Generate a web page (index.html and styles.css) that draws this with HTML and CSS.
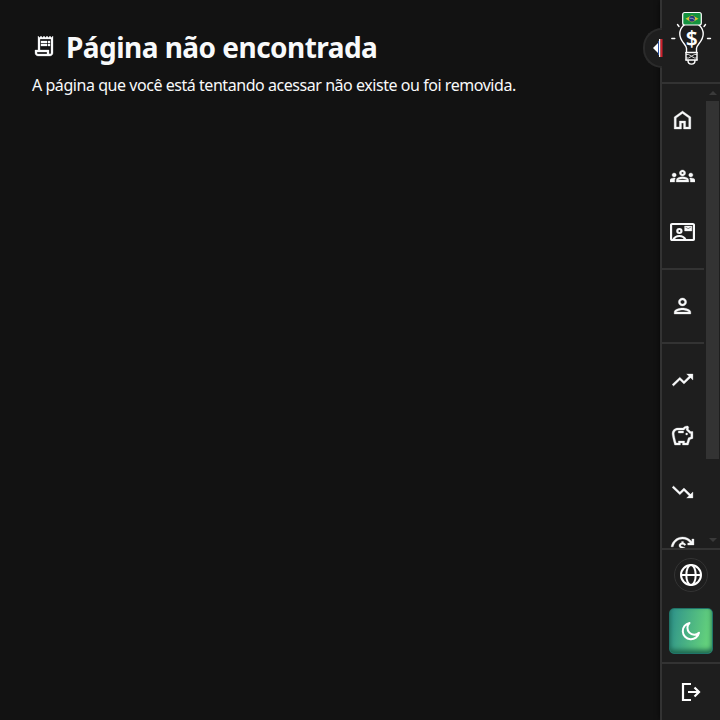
FILE: index.html
```html
<!DOCTYPE html>
<html lang="pt-BR">
<head>
<meta charset="utf-8">
<title>Página não encontrada</title>
<link rel="stylesheet" href="styles.css">
</head>
<body>
<main class="content">
  <h1 class="title">
    <svg class="icon" viewBox="0 0 24 24"><path d="M19.5 3.5 18 2l-1.5 1.5L15 2l-1.5 1.5L12 2l-1.5 1.5L9 2 7.5 3.5 6 2v14H3v3c0 1.66 1.34 3 3 3h12c1.66 0 3-1.34 3-3V2l-1.5 1.5zM15 20H6c-.55 0-1-.45-1-1v-1h10v2zm4-1c0 .55-.45 1-1 1s-1-.45-1-1v-3H8V5h11v14zM9 7h6v2H9zM16 7h2v2h-2zM9 10h6v2H9zM16 10h2v2h-2z"/></svg>
    <span class="title-text">Página não encontrada</span>
  </h1>
  <p class="message">A página que você está tentando acessar não existe ou foi removida.</p>
</main>
<aside class="sidebar">
  <div class="toggle"><svg class="toggle-icon" viewBox="0 0 10 18"><path class="arrow" d="M0 9 5.500 3.500v11z"/><path class="bar-blue" d="M5 2h1v14H5z"/><path class="bar-white" d="M6 0h1.500v18H6z"/><path class="bar-red" d="M7.500 0h2v18h-2z"/></svg></div>
  <header class="brand">
    <svg class="logo" viewBox="0 0 42 56">
      <g class="stroke">
        <path d="M16.500 42v-3.500c0-4-6.700-7-6.700-14.500a11.700 11.700 0 0 1 23.400 0c0 7.500-6.700 10.500-6.700 14.500V42M16 42.500h11M16 50h11M18 50.500c0 4.800 7 4.800 7 0M1.800 28.500h3M37.500 28.500h3M7.500 14.500l1.500 2M34 16.500l1.500-2"/>
        <path d="M16 42.500V50M27 42.500V50"/>
      </g>
      <path class="rungs" d="M16 44.500h2.500l3 1.700 3-1.700H27M16 48h2.500l3-1.700 3 1.700H27"/>
      <rect class="flag" x="12.700" y="2.500" width="18.600" height="12.500" rx="2"/>
      <path class="diamond" d="M15.500 8.750 22 5l6.500 3.750L22 12.500z"/>
      <circle class="disc" cx="22" cy="8.750" r="2.900"/>
      <path class="band" d="M19.500 8.300q3-.6 5 1.300"/>
      <text class="dollar" x="21.700" y="35.500">$</text>
    </svg>
  </header>
  <div class="scroll">
    <nav class="nav">
      <div class="group">
        <a class="item"><svg class="icon" viewBox="0 0 24 24"><path d="M6 19h3v-6h6v6h3v-9l-6-4.500L6 10v9Zm-2 2V9l8-6 8 6v12h-7v-6h-2v6H4Z"/></svg></a>
        <a class="item"><svg class="icon" viewBox="0 0 24 24"><path d="M4 13c1.100 0 2-.9 2-2s-.9-2-2-2-2 .9-2 2 .9 2 2 2zm1.130 1.100c-.37-.06-.74-.1-1.130-.1-.99 0-1.930.21-2.780.58C.48 14.900 0 15.620 0 16.430V18h4.500v-1.610c0-.83.23-1.610.63-2.290zM20 13c1.100 0 2-.9 2-2s-.9-2-2-2-2 .9-2 2 .9 2 2 2zm4 3.430c0-.81-.48-1.530-1.220-1.850-.85-.37-1.790-.58-2.780-.58-.39 0-.76.04-1.130.1.4.68.63 1.460.63 2.290V18H24v-1.570zM16.240 13.650c-1.170-.52-2.610-.9-4.240-.9s-3.070.39-4.240.9C6.680 14.130 6 15.210 6 16.390V18h12v-1.610c0-1.180-.68-2.260-1.760-2.740zM8.070 16c.09-.23.13-.39.91-.69.97-.38 1.990-.56 3.020-.56s2.050.18 3.020.56c.77.3.81.46.91.69H8.070zM12 8c.55 0 1 .45 1 1s-.45 1-1 1-1-.45-1-1 .45-1 1-1m0-2c-1.660 0-3 1.340-3 3s1.340 3 3 3 3-1.340 3-3-1.340-3-3-3z"/></svg></a>
        <a class="item"><svg class="icon" viewBox="0 0 24 24"><g class="line"><rect x="1" y="4" width="22" height="16" rx="1"/><circle cx="9" cy="11" r="2"/><path d="M3 20c1.200-2.800 3.500-4 6-4s4.800 1.200 6 4"/></g><path fill-rule="evenodd" d="M14 6h7v5h-7zM15 6.800v.7l2.500 1.500L20 7.500v-.7l-2.500 1.500z"/></svg></a>
      </div>
      <div class="group">
        <a class="item"><svg class="icon" viewBox="0 0 24 24"><path d="M12 6c1.100 0 2 .9 2 2s-.9 2-2 2-2-.9-2-2 .9-2 2-2m0 10c2.700 0 5.800 1.290 6 2H6c.23-.72 3.310-2 6-2m0-12C9.790 4 8 5.790 8 8s1.790 4 4 4 4-1.790 4-4-1.790-4-4-4zm0 10c-2.670 0-8 1.340-8 4v2h16v-2c0-2.660-5.330-4-8-4z"/></svg></a>
      </div>
      <div class="group">
        <a class="item"><svg class="icon" viewBox="0 0 24 24"><path d="m16 6 2.290 2.290-4.880 4.880-4-4L2 16.590 3.410 18l6-6 4 4 6.300-6.290L22 12V6z"/></svg></a>
        <a class="item"><svg class="icon" viewBox="0 0 24 24"><path d="M15 10c0-.55.45-1 1-1s1 .45 1 1-.45 1-1 1-1-.45-1-1zM8 9h5V7H8v2zM22 7.500v6.970l-2.820.94L17.500 21H12v-2h-2v2H4.500S2 12.540 2 9.500C2 6.460 4.460 4 7.500 4h5c.91-1.210 2.360-2 4-2 .83 0 1.500.67 1.500 1.500 0 .21-.04.4-.12.58-.14.34-.26.73-.32 1.150l2.370 2.270H22zm-2 2h-1L15.500 6c0-.65.09-1.290.26-1.910-.97.25-1.760.97-2.090 1.910H7.500C5.570 6 4 7.570 4 9.500c0 1.880 1.220 6.650 2.010 9.500H8v-2h6v2h2.010l1.550-5.150 2.440-.82V9.500z"/></svg></a>
        <a class="item"><svg class="icon" viewBox="0 0 24 24"><path d="m16 18 2.290-2.290-4.880-4.880-4 4L2 7.410 3.410 6l6 6 4-4 6.300 6.290L22 12v6z"/></svg></a>
        <a class="item"><svg class="icon" viewBox="0 0 24 24"><path d="M12 1C6.500 1 2 5 1 10.800h2.100C4 6.300 7.600 3 12 3c3 0 5.700 1.600 7.300 4H17v2h6V3h-2v2.500C19 2.800 15.700 1 12 1zm-.9 4.500v1.300C9.500 7.100 8.600 8.200 8.600 9.500c0 1.500 1 2.400 3.200 3.100 1.700.6 2.100 1 2.100 1.600 0 .7-.6 1.200-1.800 1.200-1.100 0-1.700-.5-2-1.300l-1.600.6c.4 1.300 1.400 2 2.600 2.300v1.200h1.800V17c1.800-.3 2.800-1.300 2.800-2.800 0-1.600-.9-2.500-3.300-3.300-1.500-.5-2-.8-2-1.400s.6-1.100 1.600-1.100 1.500.5 1.700 1.100l1.600-.7c-.4-1.100-1.200-1.800-2.400-2V5.500z"/></svg></a>
      </div>
    </nav>
    <div class="scrollbar"><i class="up"></i><i class="thumb"></i><i class="down"></i></div>
  </div>
  <div class="tools">
    <div class="globe"><svg class="globe-icon" viewBox="0 0 24 24"><circle cx="12" cy="12" r="10"/><ellipse cx="12" cy="12" rx="4.700" ry="10"/><path d="M2 12h20"/></svg></div>
    <div class="theme"><svg class="moon" viewBox="0 0 20 20"><path d="M8.500 2A8.200 8.200 0 1 0 18 11.800 6.300 6.300 0 0 1 8.500 2Z"/></svg></div>
  </div>
  <footer class="logout"><svg class="exit" viewBox="0 0 20 20"><path d="M10 2H2v16h8M7 10h11M13.500 5.500 18 10l-4.500 4.500"/></svg></footer>
</aside>
</body>
</html>
```

FILE: styles.css
```css
* { box-sizing: border-box; }
body {
  margin: 0;
  height: 720px;
  display: flex;
  overflow: hidden;
  background: #121212;
  color: #f8f9fa;
  font-family: "Segoe UI", "Noto Sans", sans-serif;
}
.content { flex: 1; padding: 27px 32px; }
.title { display: flex; align-items: center; gap: 10px; height: 40px; margin: 0; font-size: 28px; line-height: 40px; }
.title .icon { width: 24px; height: 24px; margin-top: -2px; }
.title-text { font-size: 28px; letter-spacing: -0.54px; white-space: nowrap; }
.message { margin: 6px 0 0; font-size: 16px; line-height: 24px; letter-spacing: -0.45px; white-space: nowrap; }
.icon { display: block; width: 24px; height: 24px; fill: currentColor; stroke: currentColor; stroke-width: 0.3; }
.line { fill: none; stroke: currentColor; stroke-width: 2.1; }
.sidebar {
  position: relative;
  display: flex;
  flex-direction: column;
  width: 60px;
  border-left: 2px solid #333;
  background: #1e1e1e;
  box-shadow: 0 0 5px #000a;
}
.toggle {
  position: absolute;
  z-index: 1;
  left: -19px;
  top: 28px;
  width: 19px;
  height: 40px;
  border: 2px solid #2b2b2b;
  border-right: 0;
  border-radius: 20px 0 0 20px;
  background: #1e1e1e;
}
.toggle-icon { position: absolute; left: 8px; top: 9px; width: 10px; height: 18px; }
.arrow, .bar-white { fill: #fff; }
.bar-blue { fill: #2850a0; }
.bar-red { fill: #d0202c; }
.brand { height: 84px; border-bottom: 2px solid #333; padding: 10px 0 0 8px; }
.logo { display: block; width: 42px; height: 56px; }
.stroke { fill: none; stroke: #fff; stroke-width: 1.4; stroke-linecap: round; stroke-linejoin: round; }
.rungs { fill: none; stroke: #fff; stroke-width: 0.8; }
.flag { fill: #14923f; stroke: #fff; stroke-width: 1.2; }
.diamond { fill: #d8c433; }
.disc { fill: #20377c; }
.band { fill: none; stroke: #cde; stroke-width: 0.6; }
.dollar { fill: #fff; font: 600 21px "Noto Sans", sans-serif; text-anchor: middle; }
.scroll { display: flex; height: 464px; overflow: hidden; }
.nav { width: 42px; }
.group { padding: 8px 0; border-bottom: 2px solid #333; }
.item { display: flex; align-items: center; justify-content: center; height: 56px; padding-right: 1px; }
.item .icon { transform: translateX(-0.5px) scaleX(1.04); }
.scrollbar { display: flex; flex-direction: column; align-items: center; width: 13px; margin-left: 2px; padding: 7px 0 6px; }
.up, .down { border: 4px solid transparent; }
.up { border-top: 0; border-bottom-color: #3a3a3a; }
.down { margin-top: auto; border-bottom: 0; border-top-color: #3a3a3a; }
.thumb { width: 13px; height: 358px; margin-top: 6px; background: #333; }
.tools { display: flex; flex-direction: column; align-items: center; gap: 16px; height: 114px; padding-top: 8px; border-top: 2px solid #333; }
.globe { display: grid; place-items: center; width: 34px; height: 34px; border: 1px solid #333; border-radius: 50%; }
.globe-icon { width: 24px; height: 24px; fill: none; stroke: #fff; stroke-width: 2; }
.theme {
  display: grid;
  place-items: center;
  width: 44px;
  height: 46px;
  border: 1px solid #207469;
  border-radius: 5px;
  background: linear-gradient(100deg, #31958b 5%, #63d07c 85%);
  box-shadow: inset 0 -3px 5px #1c654e;
}
.moon { width: 20px; height: 20px; fill: none; stroke: #fff; stroke-width: 2; stroke-linejoin: round; }
.logout { display: grid; place-items: center; height: 58px; border-top: 2px solid #333; }
.exit { width: 20px; height: 20px; fill: none; stroke: #fff; stroke-width: 2.2; }
```
